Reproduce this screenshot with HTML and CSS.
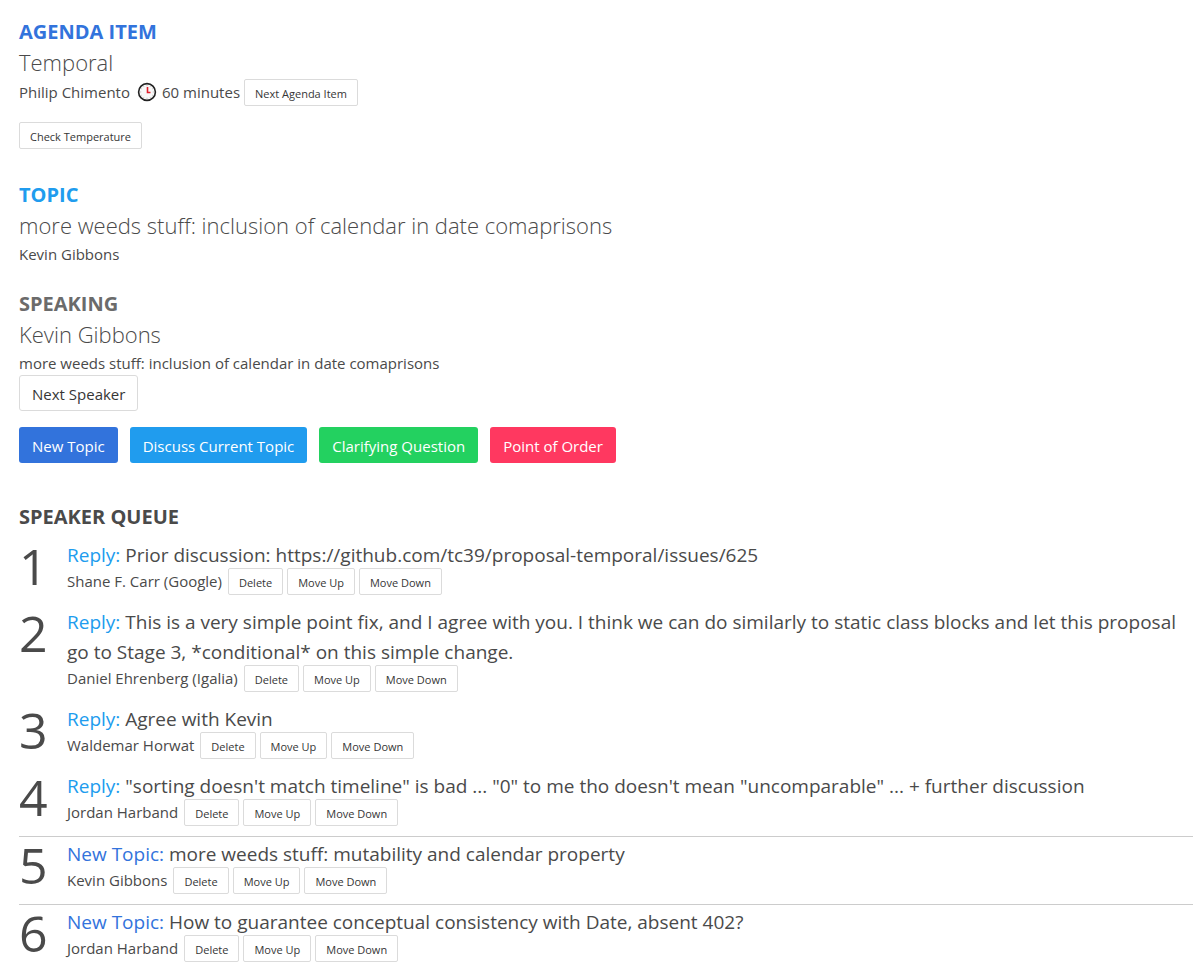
FILE: index.html
```
<!DOCTYPE html>
<html lang="en">
<head>
    <meta charset="UTF-8">
    <meta name="viewport" content="width=device-width, initial-scale=1.0">
    <title>Temporal - Speaker Queue</title>
    <link rel="stylesheet" href="styles.css">
</head>
<body>

    <section class="agenda-item">
        <h2 class="heading link">Agenda Item</h2>
        <p class="title">Temporal</p>
        <div class="details">
            <span class="name">Philip Chimento</span>
            <svg class="clock" viewBox="0 0 22 22" aria-hidden="true">
                <circle cx="11" cy="11" r="8.4" fill="#f8f8f8" stroke="#222" stroke-width="1.6"/>
                <path d="M11 4.2v1M11 16.8v1M4.2 11h1M16.8 11h1M7.6 5.2l.4.7M14.4 5.2l-.4.7M7.6 16.8l.4-.7M14.4 16.8l-.4-.7M5.2 7.6l.7.4M16.8 7.6l-.7.4M5.2 14.4l.7-.4M16.8 14.4l-.7-.4" stroke="#aaa" stroke-width="0.8"/>
                <path d="M11.5 6V11.5H14.5" fill="none" stroke="#e0202c" stroke-width="1.6"/>
            </svg>
            <span>60 minutes</span>
            <button class="button small">Next Agenda Item</button>
        </div>
        <button class="button small temperature">Check Temperature</button>
    </section>

    <section class="topic">
        <h2 class="heading info">Topic</h2>
        <p class="title">more weeds stuff: inclusion of calendar in date comaprisons</p>
        <p class="text">Kevin Gibbons</p>
    </section>

    <section class="speaking">
        <h2 class="heading grey">Speaking</h2>
        <p class="title">Kevin Gibbons</p>
        <p class="text">more weeds stuff: inclusion of calendar in date comaprisons</p>
        <button class="button">Next Speaker</button>
    </section>

    <div class="actions">
        <button class="button is-link">New Topic</button>
        <button class="button is-info">Discuss Current Topic</button>
        <button class="button is-success">Clarifying Question</button>
        <button class="button is-danger">Point of Order</button>
    </div>

    <section class="queue">
        <h2 class="heading">Speaker Queue</h2>
        <ol class="queue-list">
            <li class="entry">
                <span class="number">1</span>
                <div class="entry-body">
                    <p class="entry-topic"><span class="info">Reply:</span> Prior discussion: https://github.com/tc39/proposal-temporal/issues/625</p>
                    <div class="details">
                        <span class="name">Shane F. Carr (Google)</span>
                        <button class="button small">Delete</button>
                        <button class="button small">Move Up</button>
                        <button class="button small">Move Down</button>
                    </div>
                </div>
            </li>
            <li class="entry">
                <span class="number">2</span>
                <div class="entry-body">
                    <p class="entry-topic"><span class="info">Reply:</span> This is a very simple point fix, and I agree with you. I think we can do similarly to static class blocks and let this proposal go to Stage 3, *conditional* on this simple change.</p>
                    <div class="details">
                        <span class="name">Daniel Ehrenberg (Igalia)</span>
                        <button class="button small">Delete</button>
                        <button class="button small">Move Up</button>
                        <button class="button small">Move Down</button>
                    </div>
                </div>
            </li>
            <li class="entry">
                <span class="number">3</span>
                <div class="entry-body">
                    <p class="entry-topic"><span class="info">Reply:</span> Agree with Kevin</p>
                    <div class="details">
                        <span class="name">Waldemar Horwat</span>
                        <button class="button small">Delete</button>
                        <button class="button small">Move Up</button>
                        <button class="button small">Move Down</button>
                    </div>
                </div>
            </li>
            <li class="entry">
                <span class="number">4</span>
                <div class="entry-body">
                    <p class="entry-topic"><span class="info">Reply:</span> "sorting doesn't match timeline" is bad ... "0" to me tho doesn't mean "uncomparable" ... + further discussion</p>
                    <div class="details">
                        <span class="name">Jordan Harband</span>
                        <button class="button small">Delete</button>
                        <button class="button small">Move Up</button>
                        <button class="button small">Move Down</button>
                    </div>
                </div>
            </li>
            <li class="entry new-topic">
                <span class="number">5</span>
                <div class="entry-body">
                    <p class="entry-topic"><span class="link">New Topic:</span> more weeds stuff: mutability and calendar property</p>
                    <div class="details">
                        <span class="name">Kevin Gibbons</span>
                        <button class="button small">Delete</button>
                        <button class="button small">Move Up</button>
                        <button class="button small">Move Down</button>
                    </div>
                </div>
            </li>
            <li class="entry new-topic">
                <span class="number">6</span>
                <div class="entry-body">
                    <p class="entry-topic"><span class="link">New Topic:</span> How to guarantee conceptual consistency with Date, absent 402?</p>
                    <div class="details">
                        <span class="name">Jordan Harband</span>
                        <button class="button small">Delete</button>
                        <button class="button small">Move Up</button>
                        <button class="button small">Move Down</button>
                    </div>
                </div>
            </li>
        </ol>
    </section>

</body>
</html>
```
FILE: styles.css
```
* {
    box-sizing: border-box;
}
body {
    margin: 0;
    padding: 17px 0 0 19px;
    font-family: "Open Sans", "Noto Sans", sans-serif;
    font-size: 15px;
    line-height: 24px;
    color: #4a4a4a;
    background-color: #fff;
}
h2, p, ol {
    margin: 0;
    padding: 0;
}
.heading {
    font-size: 20px;
    font-weight: 700;
    line-height: 30px;
    text-transform: uppercase;
}
.title {
    padding-bottom: 2px;
    font-size: 22px;
    font-weight: 300;
    line-height: 30px;
}
.link {
    color: #3273dc;
}
.info {
    color: #209cee;
}
.grey {
    color: #6b6b6b;
}
.details {
    display: flex;
    align-items: flex-start;
    gap: 4px;
    line-height: 26px;
}
.name {
    margin-right: 2px;
}
.clock {
    width: 22px;
    height: 26px;
}
.button {
    display: block;
    height: 36px;
    padding: 2px 12px 0;
    border: 1px solid #dbdbdb;
    border-radius: 3px;
    background-color: #fff;
    color: #363636;
    font-family: inherit;
    font-size: 15px;
    white-space: nowrap;
    cursor: pointer;
}
.small {
    height: 27px;
    padding: 2px 10px 0;
    border-radius: 2px;
    font-size: 11px;
}
.temperature {
    margin-top: 16px;
}
.topic {
    margin-top: 31px;
}
.speaking {
    margin-top: 23px;
}
.actions {
    display: flex;
    flex-wrap: wrap;
    gap: 12px;
    margin-top: 16px;
}
.is-link, .is-info, .is-success, .is-danger {
    border: none;
    padding: 2px 13px 0;
    color: #fff;
}
.is-link {
    background-color: #3273dc;
}
.is-info {
    background-color: #209cee;
}
.is-success {
    background-color: #23d160;
}
.is-danger {
    background-color: #ff3860;
}
.queue {
    margin-top: 39px;
}
.queue-list {
    margin-top: 6px;
    list-style: none;
}
.entry {
    display: flex;
    padding: 2px 0 10px;
}
.entry .details {
    margin-top: -2px;
}
.new-topic {
    border-top: 1px solid #ccc;
}
.number {
    flex: none;
    width: 48px;
    font-size: 50px;
    line-height: 52px;
}
.entry-topic {
    font-size: 19px;
    line-height: 30px;
}
```
